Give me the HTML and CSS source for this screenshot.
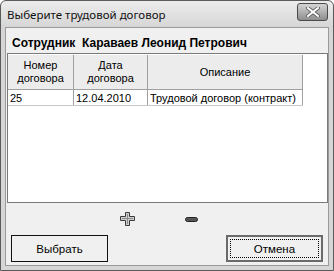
FILE: index.html
```html
<!DOCTYPE html>
<html>
<head>
    <title>Выберите трудовой договор</title>
    <link rel="stylesheet" href="styles.css">
</head>
<body>
    <div class="window">
        <div class="title-bar">
            <span class="title">Выберите трудовой договор</span>
            <div class="close-btn">
                <svg width="14" height="10" viewBox="0 0 14 10">
                    <path d="M2 1 L12 9 M12 1 L2 9" stroke="#555" stroke-width="3.6" stroke-linecap="square"/>
                    <path d="M2 1 L12 9 M12 1 L2 9" stroke="#fff" stroke-width="2" stroke-linecap="square"/>
                </svg>
            </div>
        </div>
        <div class="client">
            <div class="employee">Сотрудник&nbsp; Караваев Леонид Петрович</div>
            <div class="grid">
                <table>
                    <tr class="head">
                        <th class="c1">Номер<br>договора</th>
                        <th class="c2">Дата<br>договора</th>
                        <th class="c3">Описание</th>
                    </tr>
                    <tr class="row">
                        <td>25</td>
                        <td>12.04.2010</td>
                        <td>Трудовой договор (контракт)</td>
                    </tr>
                </table>
            </div>
            <div class="tools">
                <svg class="plus" width="15" height="14" viewBox="0 0 15 14">
                    <path d="M5.5 0.5 H9.5 V4.5 H14.5 V8.5 H9.5 V13.5 H5.5 V8.5 H0.5 V4.5 H5.5 Z" fill="#cfcfcf" stroke="#3a3a3a" stroke-width="1"/>
                    <path d="M7.5 2 V12 M2 6.5 H13" stroke="#8a8a8a" stroke-width="1"/>
                </svg>
                <svg class="minus" width="13" height="5" viewBox="0 0 13 5">
                    <rect x="0.5" y="0.5" width="12" height="4" rx="2" fill="#555" stroke="#222"/>
                </svg>
            </div>
            <div class="buttons">
                <button class="btn">Выбрать</button>
                <button class="btn default"><span>Отмена</span></button>
            </div>
        </div>
    </div>
</body>
</html>
```

FILE: styles.css
```css
body {
    margin: 0;
    background-color: #fff;
    font-family: "Liberation Sans", Arial, sans-serif;
}

.window {
    width: 332px;
    height: 269px;
    border: 1px solid #5a5a5a;
    border-radius: 6px 6px 0 0;
    background: linear-gradient(#ececec, #d6d6d6 26px, #d6d6d6);
    display: flex;
    flex-direction: column;
}

.title-bar {
    height: 26px;
    display: flex;
    align-items: center;
    justify-content: space-between;
    padding: 0 5px 0 6px;
}

.title {
    font-family: "Noto Sans", sans-serif;
    font-size: 11.5px;
    color: #111;
}

.close-btn {
    width: 29px;
    height: 16px;
    margin-top: -4px;
    border: 1px solid #4a4a4a;
    border-radius: 3px;
    background: linear-gradient(#d4d4d4, #8e8e8e);
    display: flex;
    align-items: center;
    justify-content: center;
}

.client {
    flex: 1;
    margin: 0 4px 4px 4px;
    background-color: #f0f0f0;
    border: 1px solid #9a9a9a;
    display: flex;
    flex-direction: column;
}

.employee {
    font-weight: bold;
    font-size: 12px;
    padding: 8px 0 0 6px;
    height: 15px;
    color: #000;
}

.grid {
    margin: 2px 0 0 1px;
    width: 319px;
    height: 148px;
    background-color: #fff;
    border: 1px solid #7a7a7a;
}

table {
    border-collapse: collapse;
    font-size: 11px;
    margin-top: 1px;
}

.head th {
    background-color: #ececec;
    font-weight: normal;
    height: 34px;
    line-height: 13px;
    border: 1px solid #a0a0a0;
    border-top: none;
    border-left: none;
    padding: 0;
    text-align: center;
}

.c1 { width: 65px; }
.c2 { width: 73px; }
.c3 { width: 154px; }

.row td {
    height: 15px;
    padding: 0 2px;
    border-right: 1px solid #a0a0a0;
    border-bottom: 1px solid #c8c8c8;
    white-space: nowrap;
}

.tools {
    height: 32px;
    display: flex;
    align-items: center;
    padding-left: 114px;
}

.minus {
    margin-left: 50px;
}

.buttons {
    display: flex;
    justify-content: space-between;
    padding: 0 5px 0 5px;
}

.btn {
    width: 97px;
    height: 27px;
    background-color: #f0f0f0;
    border: 1px solid #111;
    font-family: "Liberation Sans", Arial, sans-serif;
    font-size: 11.5px;
    padding: 0;
}

.btn.default {
    border: 2px solid #6a6a6a;
    padding: 2px;
}

.btn.default span {
    display: block;
    height: 100%;
    border: 1px dotted #000;
    box-sizing: border-box;
    line-height: 19px;
}
```
